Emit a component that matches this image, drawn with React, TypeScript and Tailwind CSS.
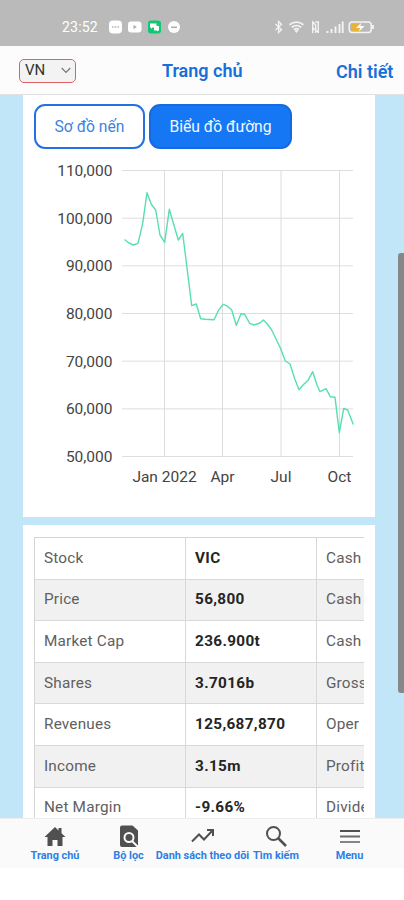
import React from 'react';

const rows: [string, string, string][] = [
  ['Stock', 'VIC', 'Cash'],
  ['Price', '56,800', 'Cash'],
  ['Market Cap', '236.900t', 'Cash'],
  ['Shares', '3.7016b', 'Gross'],
  ['Revenues', '125,687,870', 'Oper'],
  ['Income', '3.15m', 'Profit'],
  ['Net Margin', '-9.66%', 'Divide'],
];

const yTicks = ['110,000', '100,000', '90,000', '80,000', '70,000', '60,000', '50,000'];
const xTicks: [number, string][] = [[141.5, 'Jan 2022'], [199.5, 'Apr'], [258, 'Jul'], [316.5, 'Oct']];

function StatusBar() {
  return (
    <div className="flex h-[46px] shrink-0 items-center bg-[#bababa] pt-[8px] pl-[62px] text-white">
      <span className="w-[37px] text-[14px] leading-4 tracking-[0.2px]">23:52</span>
      <svg className="ml-[10px]" width="72" height="14" viewBox="0 0 72 14">
        <rect x="0" y="0.5" width="13" height="13" rx="4" fill="#fff" />
        <path d="M3 7h1.6M5.6 7h1.8M8.4 7H10" stroke="#bababa" strokeWidth="1.6" />
        <rect x="19" y="1.5" width="13.5" height="11" rx="3" fill="#fff" />
        <path d="M24.5 5v4l3.4-2z" fill="#aaa" />
        <rect x="39" y="0.5" width="13" height="13" rx="3" fill="#0fc873" />
        <path d="M41 3.5h6.5v4h-4L42 9V7.5h-1zM45 6h5v4.5h-1v1l-1.3-1H45z" fill="#fff" />
        <circle cx="65" cy="7" r="6" fill="#fff" />
        <path d="M62 7.3h6" stroke="#b0b0b0" strokeWidth="1.6" />
      </svg>
      <svg className="ml-[93px]" width="102" height="14" viewBox="0 0 102 14" fill="none" stroke="#f3f3f3">
        <path d="M1.5 4l6 5.8-3 2.7v-11l3 2.7-6 5.8" strokeWidth="1.3" />
        <path d="M15.500 4.700q7-5 14 0M17.800 7.200q4.700-3.400 9.400 0M20 9.600q2.500-1.800 5 0" strokeWidth="1.7" />
        <path d="M21 10.500h3L22.500 12.500z" fill="#f3f3f3" strokeWidth="0.8" />
        <path d="M38.700 13V2l3 3v8M41.300 2h3v11M39 8l5 4" strokeWidth="1.4" />
        <path d="M53.500 13v-2M57.500 13V9M61.500 13V6.500M65.500 13V4M68.700 13V1.500" strokeWidth="1.9" />
        <rect x="75.200" y="2" width="22" height="10.500" rx="3" strokeWidth="1.5" />
        <path d="M99 5v4" strokeWidth="1.8" />
        <rect x="77" y="3.600" width="10" height="7.300" rx="1" fill="#e6b33e" stroke="none" />
        <path d="M87 3l-5 5h4l-1 3.500 5.500-5.500h-4z" fill="#fff" stroke="none" />
      </svg>
    </div>
  );
}

function Header() {
  return (
    <header className="flex h-[49px] shrink-0 items-center border-b border-[#e2e0e0] bg-[#fcfcfc] text-[#186fda]">
      <div className="mt-[1px] ml-[19px] flex h-[24px] w-[57px] items-center justify-between rounded-[5px] border border-[#df6262] bg-[#f3f3f3] pr-[4px] pl-[5px] text-[15px] text-[#333]">
        <span>VN</span>
        <svg width="10" height="7" viewBox="0 0 10 7" fill="none" stroke="#777" strokeWidth="1.2">
          <path d="M.7 1L5 5.500 9.300 1" />
        </svg>
      </div>
      <div className="mt-[1px] ml-[86px] w-[100px] text-[18px] font-semibold whitespace-nowrap">Trang chủ</div>
      <div className="mt-[2px] ml-[74px] text-[18px] font-semibold whitespace-nowrap">Chi tiết</div>
    </header>
  );
}

function Chart() {
  return (
    <svg className="block" width="352" height="345" viewBox="0 0 352 345" fontSize="15.500" fill="#444">
      {yTicks.map((t, i) => (
        <g key={t}>
          <path d={`M99 ${21.5 + i * 47.67}H330`} stroke="#dedede" />
          <text x="89.500" y={27 + i * 47.67} textAnchor="end">{t}</text>
        </g>
      ))}
      {xTicks.map(([x, t]) => (
        <g key={t}>
          <path d={`M${x} 21.500V307.500`} stroke="#dcdcdc" />
          <text x={x} y="333" textAnchor="middle">{t}</text>
        </g>
      ))}
      <polyline
        transform="translate(-23 -149)"
        fill="none"
        stroke="#58dfb0"
        strokeWidth="1.4"
        strokeLinejoin="round"
        points="124.5,239.5 129,243 133.3,245 138,243.3 142.700,223.3 147,192.700 151.3,204.3 155.700,210 160,235 164.700,242.3 169.3,209.3 178.3,240 182.700,233.3 191.700,305.700 196.3,304 200.700,318.700 205,319.3 214,319.700 218.3,310.700 223,304.3 226.700,305.700 231.700,310 236.3,325.3 241,313.700 244.700,314.3 249.700,323.3 254,325 260,323 263.3,320 267.3,324 271.700,330 280.700,348.700 285.3,361 290,364 294.700,378.700 299,389.700 303.3,384.700 308,380.3 312.700,371.700 317,385 320,391.700 326,388.700 330.3,396.700 335,397.3 339.3,432.700 343.700,408.5 347.700,410 353.3,424.5"
      />
    </svg>
  );
}

function NavItem({ width, label, children }: { width: string; label: string; children: React.ReactNode }) {
  return (
    <div className={`flex shrink-0 flex-col items-center ${width}`}>
      <svg width="26" height="24" viewBox="0 0 26 24" fill="none" stroke="#505050" strokeWidth="2">{children}</svg>
      <span className="mt-[1px] text-[10.9px] leading-[13px] font-bold whitespace-nowrap text-[#2d7fe5]">{label}</span>
    </div>
  );
}

export default function App() {
  return (
    <div className="flex h-[900px] w-[404px] flex-col overflow-hidden bg-white font-['Roboto','Liberation_Sans',sans-serif]">
      <StatusBar />
      <Header />
      <main className="flex h-[723px] shrink-0 justify-between bg-[#c1e6f7]">
        <div className="ml-[23px] flex w-[352px] flex-col gap-[8px]">
          <section className="h-[422px] shrink-0 bg-white pt-[9px]">
            <div className="flex h-[45px] gap-[4px] pl-[11px] text-[15.7px]">
              <button className="w-[111px] rounded-[11px] border-2 border-[#2472df] bg-white text-[#3d82e2]">Sơ đồ nến</button>
              <button className="w-[143px] rounded-[11px] border-2 border-[#1769df] bg-[#1677f5] text-[#f2f7ff]">Biểu đồ đường</button>
            </div>
            <Chart />
          </section>
          <section className="h-[293px] shrink-0 overflow-hidden bg-white pt-[12px] pr-[11px] pl-[11px]">
            <div className="overflow-hidden border-t border-l border-[#d5d5d5] text-[15.3px] tracking-[0.2px]">
              {rows.map(([a, b, c], i) => (
                <div key={a} className={`flex h-[41.6px] border-b border-[#d8d8d8] ${i % 2 ? 'bg-[#f1f1f1]' : 'bg-white'}`}>
                  <div className="flex w-[151px] shrink-0 items-center border-r border-[#d8d8d8] pl-[9px] text-[#606060]">{a}</div>
                  <div className="flex w-[131px] shrink-0 items-center border-r border-[#d8d8d8] pl-[9px] font-bold tracking-[0.35px] text-[#252525]">{b}</div>
                  <div className="flex w-[100px] shrink-0 items-center pl-[9px] text-[#606060]">{c}</div>
                </div>
              ))}
            </div>
          </section>
        </div>
        <div className="mt-[158px] h-[440px] w-[6px] rounded-l-[3px] bg-[#858789]" />
      </main>
      <nav className="flex h-[50px] shrink-0 border-t border-[#eeeeee] bg-[#fafafa] pt-[5px] pl-[15px]">
        <NavItem width="w-[80px]" label="Trang chủ">
          <path d="M13 3L2.500 13h3v9h5v-6h5v6h5v-9h3l-4-3.800V4h-3v2.500z" fill="#505050" stroke="none" />
        </NavItem>
        <NavItem width="w-[67px]" label="Bộ lọc">
          <path d="M6 1.500h10.500l5.500 5v15.500q0 1-1 1H6q-2 0-2-2V3.500q0-2 2-2z" fill="#505050" stroke="none" />
          <circle cx="13" cy="13.500" r="4.500" stroke="#fafafa" />
          <path d="M16 17l6.500 6.500" stroke="#fafafa" />
        </NavItem>
        <NavItem width="w-[81px]" label="Danh sách theo dõi">
          <path d="M2 17.500l7-7 5 5L23 6M17 6h6v6" />
        </NavItem>
        <NavItem width="w-[66px]" label="Tìm kiếm">
          <circle cx="10.500" cy="9.500" r="6.500" />
          <path d="M15 14l8 8" strokeWidth="2.500" />
        </NavItem>
        <NavItem width="w-[81px]" label="Menu">
          <path d="M3 7h20" />
          <path d="M3 12.500h20" stroke="#696969" />
          <path d="M3 18h20" stroke="#858585" />
        </NavItem>
      </nav>
    </div>
  );
}
